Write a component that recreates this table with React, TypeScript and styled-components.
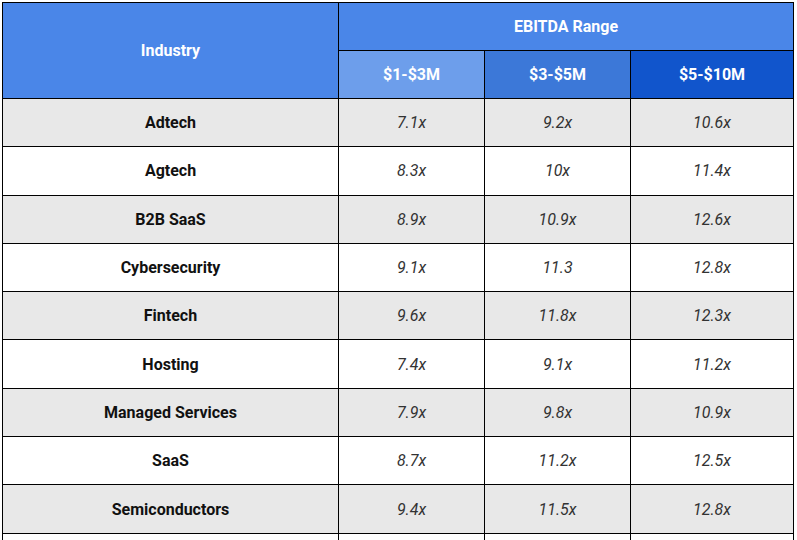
import styled, { createGlobalStyle } from "styled-components";

const GlobalStyle = createGlobalStyle`
  body {
    margin: 0;
    background: #ffffff;
    font-family: Roboto, "Liberation Sans", sans-serif;
  }
`;

type Row = {
  industry: string;
  low: string;
  mid: string;
  high: string;
};

const rows: Row[] = [
  { industry: "Adtech", low: "7.1x", mid: "9.2x", high: "10.6x" },
  { industry: "Agtech", low: "8.3x", mid: "10x", high: "11.4x" },
  { industry: "B2B SaaS", low: "8.9x", mid: "10.9x", high: "12.6x" },
  { industry: "Cybersecurity", low: "9.1x", mid: "11.3", high: "12.8x" },
  { industry: "Fintech", low: "9.6x", mid: "11.8x", high: "12.3x" },
  { industry: "Hosting", low: "7.4x", mid: "9.1x", high: "11.2x" },
  { industry: "Managed Services", low: "7.9x", mid: "9.8x", high: "10.9x" },
  { industry: "SaaS", low: "8.7x", mid: "11.2x", high: "12.5x" },
  { industry: "Semiconductors", low: "9.4x", mid: "11.5x", high: "12.8x" },
  // next row only peeks in below the fold
  { industry: "", low: "", mid: "", high: "" },
];

const App = () => {
  return (
    <Page>
      <GlobalStyle />
      <Table>
        <colgroup>
          <col style={{ width: 336 }} />
          <col style={{ width: 146 }} />
          <col style={{ width: 146 }} />
          <col style={{ width: 163 }} />
        </colgroup>
        <thead>
          <tr>
            <HeadCell rowSpan={2} tone="#4a86e8">
              Industry
            </HeadCell>
            <HeadCell colSpan={3} tone="#4a86e8">
              EBITDA Range
            </HeadCell>
          </tr>
          <tr>
            <HeadCell tone="#6d9eeb">$1-$3M</HeadCell>
            <HeadCell tone="#3c78d8">$3-$5M</HeadCell>
            <HeadCell tone="#1155cc">$5-$10M</HeadCell>
          </tr>
        </thead>
        <tbody>
          {rows.map((row, index) => (
            <BodyRow key={index} shaded={index % 2 === 0}>
              <NameCell>{row.industry}</NameCell>
              <ValueCell>{row.low}</ValueCell>
              <ValueCell>{row.mid}</ValueCell>
              <ValueCell>{row.high}</ValueCell>
            </BodyRow>
          ))}
        </tbody>
      </Table>
    </Page>
  );
};

export default App;

const Page = styled.div`
  padding: 2px 0 0 2px;
  height: 540px;
  overflow: hidden;
  box-sizing: border-box;
`;

const Table = styled.table`
  border-collapse: collapse;
  table-layout: fixed;
  width: 792px;
`;

const HeadCell = styled.th<{ tone: string }>`
  background: ${(props) => props.tone};
  color: #ffffff;
  font-size: 16px;
  font-weight: 700;
  text-align: center;
  height: 47px;
  padding: 0;
  border: 1px solid #000000;
`;

const BodyRow = styled.tr<{ shaded: boolean }>`
  background: ${(props) => (props.shaded ? "#e8e8e8" : "#ffffff")};
`;

const NameCell = styled.td`
  height: 47.3px;
  padding: 0;
  border: 1px solid #000000;
  text-align: center;
  font-size: 16px;
  font-weight: 700;
  color: #111111;
`;

const ValueCell = styled.td`
  padding: 0;
  border: 1px solid #000000;
  text-align: center;
  font-size: 16px;
  font-style: italic;
  color: #333333;
`;
